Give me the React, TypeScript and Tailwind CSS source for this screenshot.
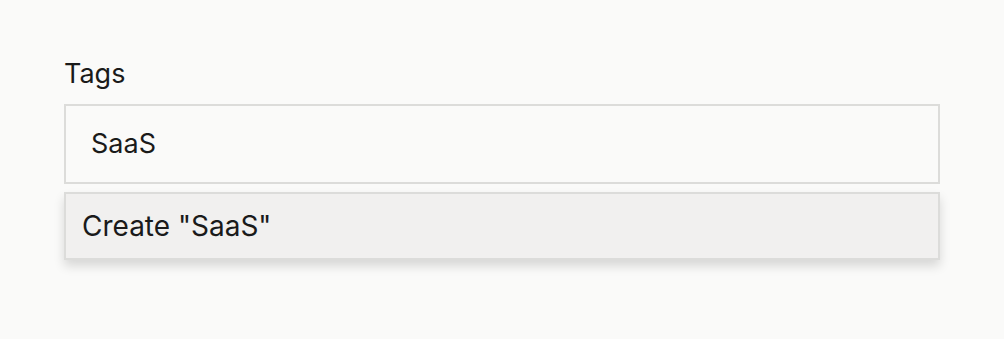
export default function App() {
  return (
    <div className="min-h-[339px] w-full bg-[#fafaf9] px-16 pt-[56px] font-['Inter',sans-serif] text-[#1a1a1a]">
      <label className="mb-[12px] block text-[27px] leading-[36px]">Tags</label>
      <div className="flex h-[80px] items-center border-2 border-[#dcdcda] bg-[#fafaf9] px-[25px] text-[27px]">
        SaaS
      </div>
      <div className="mt-2 flex h-[68px] items-center border-2 border-[#dcdcda] bg-[#f1f0ef] px-[16px] text-[28px] shadow-[0_6px_10px_rgba(0,0,0,0.14)]">
        Create "SaaS"
      </div>
    </div>
  );
}
